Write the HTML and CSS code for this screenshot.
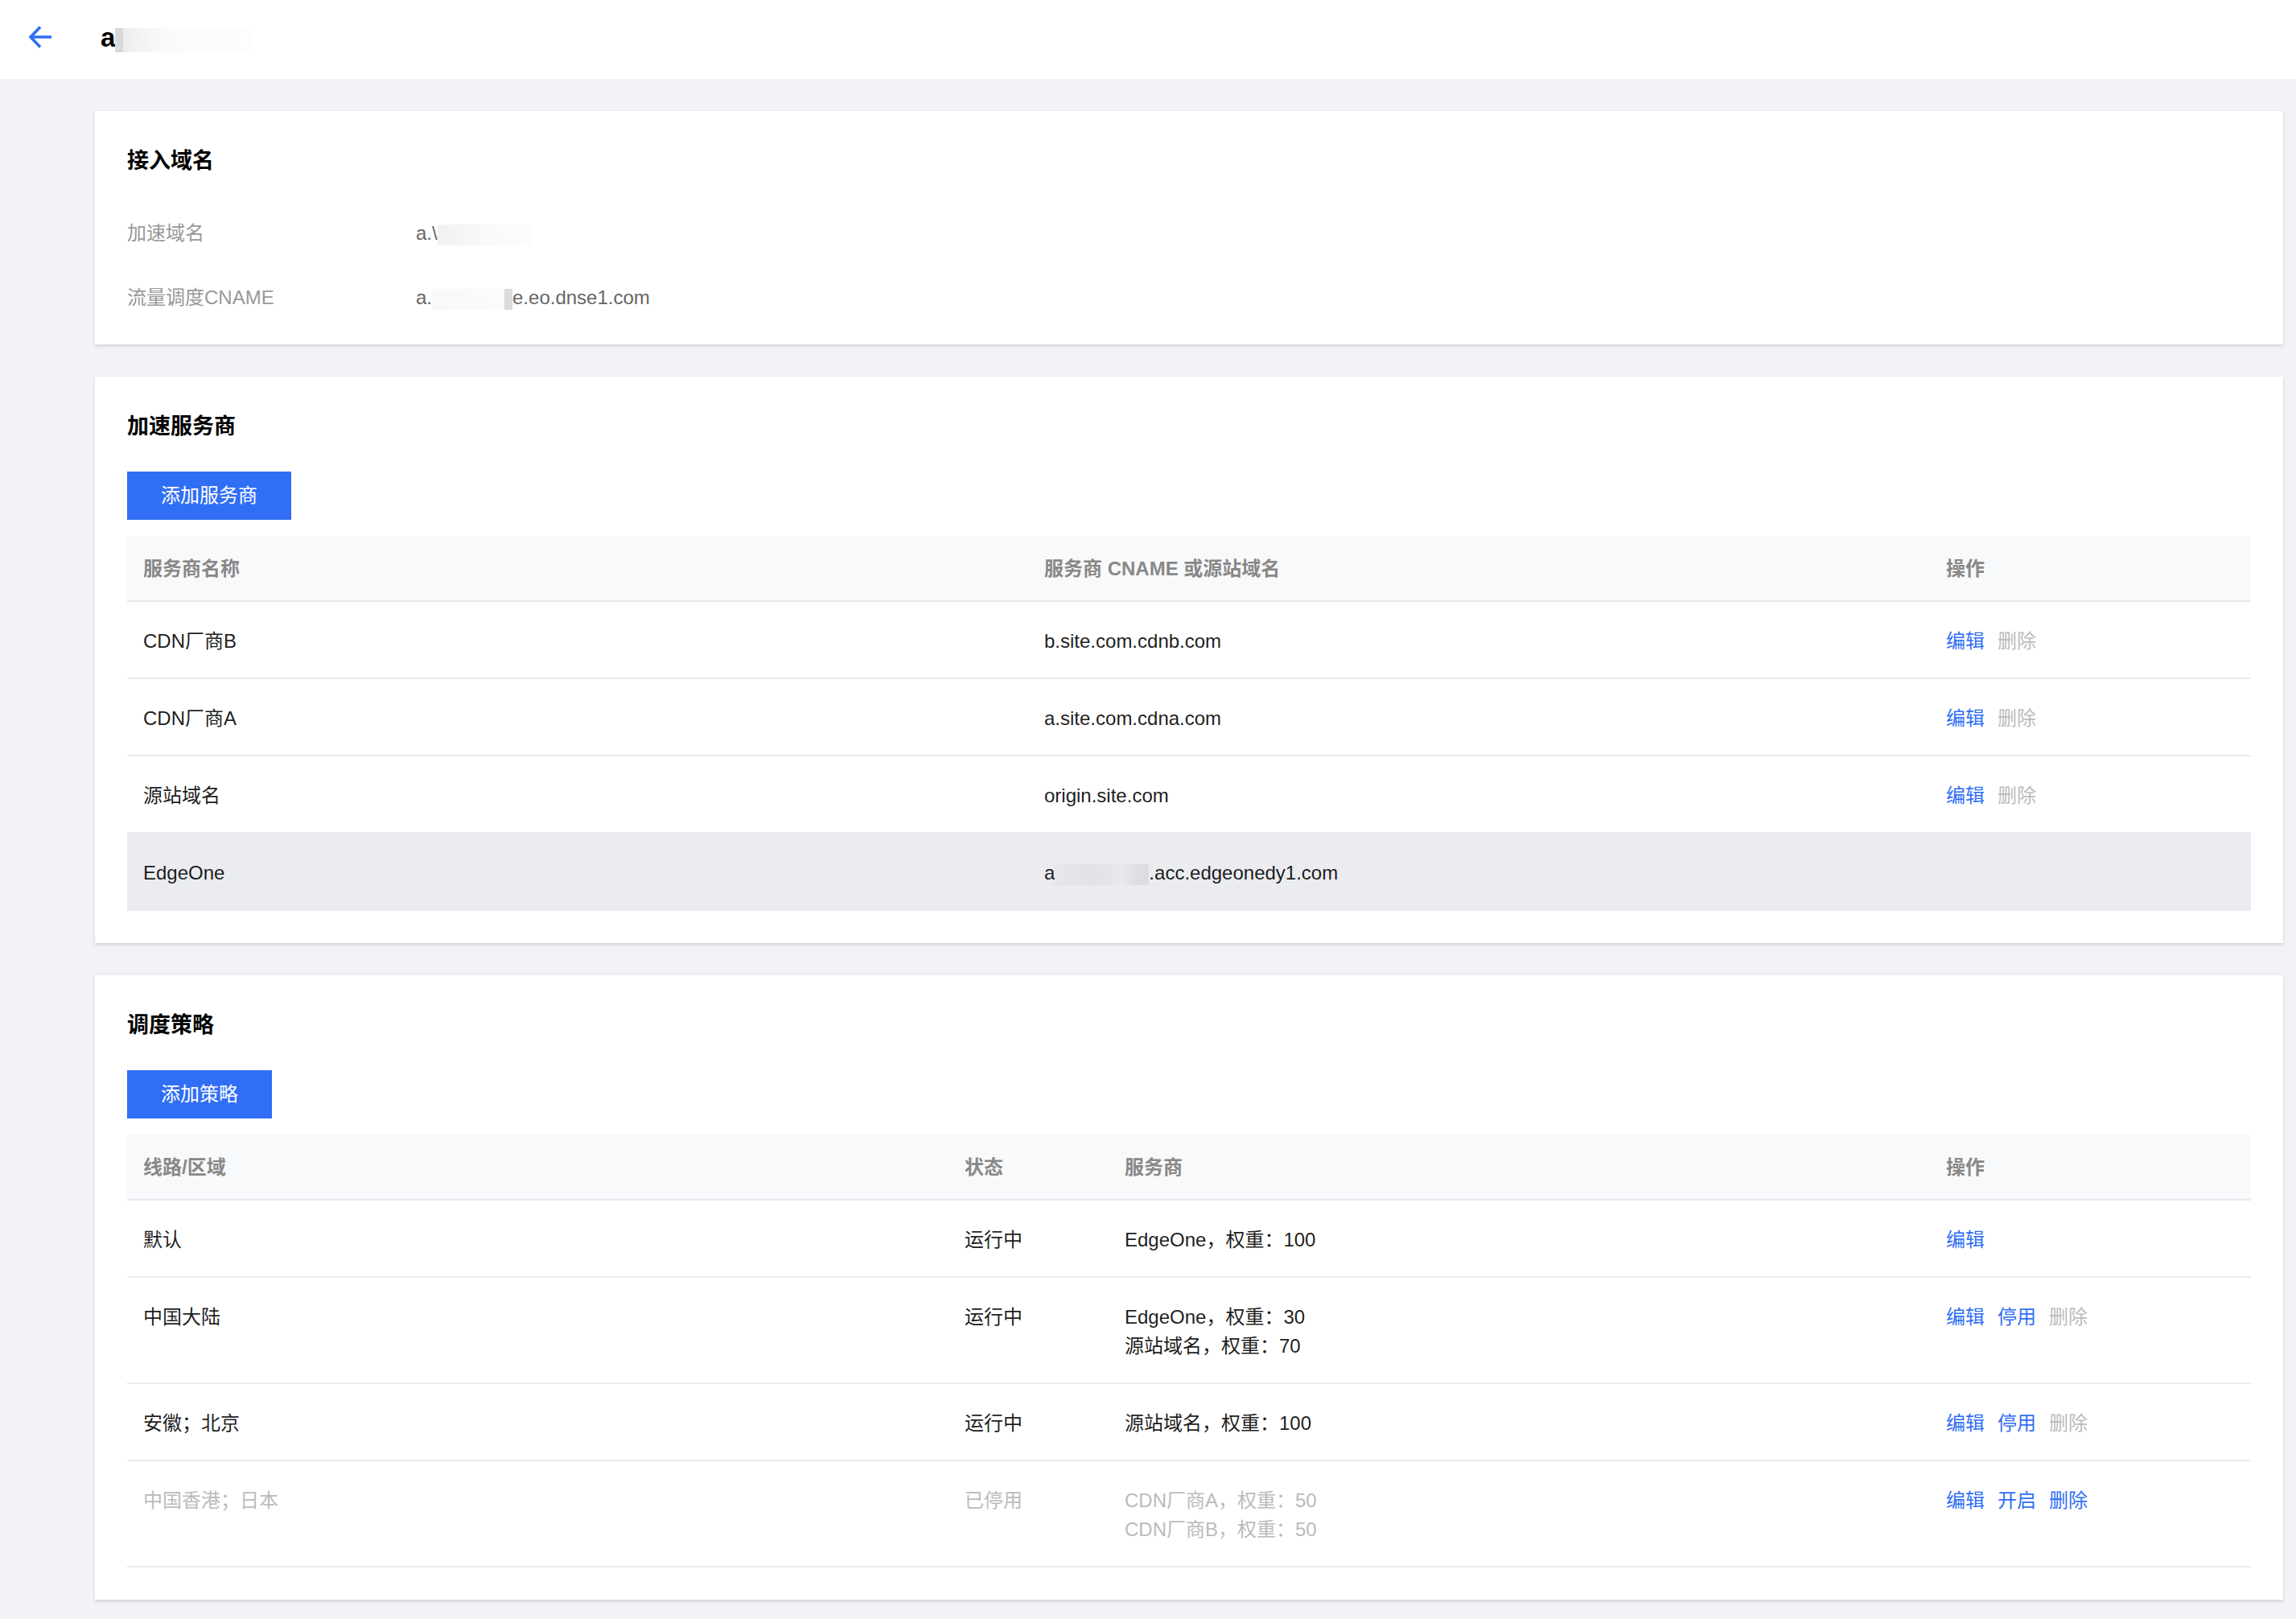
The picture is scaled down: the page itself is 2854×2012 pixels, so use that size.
FILE: index.html
```html
<!DOCTYPE html>
<html lang="zh-CN">
<head>
    <meta charset="UTF-8">
    <meta name="viewport" content="width=device-width, initial-scale=1.0">
    <title>域名详情</title>
    <link rel="stylesheet" href="styles.css">
</head>
<body>
    <header class="topbar">
        <a class="back" href="#">
            <svg width="28" height="28" viewBox="0 0 28 28">
                <path d="M28 14H2.5M14 1.5L2 14L14 26.5" fill="none" stroke="#306ef5" stroke-width="3.6"/>
            </svg>
        </a>
        <h1 class="page-title">a<span class="mask mask-title"></span></h1>
    </header>

    <main class="content">
        <section class="card">
            <h2>接入域名</h2>
            <dl class="info">
                <div class="info-row">
                    <dt>加速域名</dt>
                    <dd>a.\<span class="mask mask-domain"></span></dd>
                </div>
                <div class="info-row">
                    <dt>流量调度CNAME</dt>
                    <dd>a.<span class="mask mask-cname"></span>e.eo.dnse1.com</dd>
                </div>
            </dl>
        </section>

        <section class="card">
            <h2>加速服务商</h2>
            <button class="btn">添加服务商</button>
            <table class="grid">
                <colgroup>
                    <col class="col-name">
                    <col class="col-cname">
                    <col>
                </colgroup>
                <thead>
                    <tr><th>服务商名称</th><th>服务商 CNAME 或源站域名</th><th>操作</th></tr>
                </thead>
                <tbody>
                    <tr>
                        <td>CDN厂商B</td>
                        <td>b.site.com.cdnb.com</td>
                        <td class="ops"><a href="#">编辑</a><a href="#" class="off">删除</a></td>
                    </tr>
                    <tr>
                        <td>CDN厂商A</td>
                        <td>a.site.com.cdna.com</td>
                        <td class="ops"><a href="#">编辑</a><a href="#" class="off">删除</a></td>
                    </tr>
                    <tr>
                        <td>源站域名</td>
                        <td>origin.site.com</td>
                        <td class="ops"><a href="#">编辑</a><a href="#" class="off">删除</a></td>
                    </tr>
                    <tr class="row-hl">
                        <td>EdgeOne</td>
                        <td>a<span class="mask mask-edge"></span>.acc.edgeonedy1.com</td>
                        <td></td>
                    </tr>
                </tbody>
            </table>
        </section>

        <section class="card">
            <h2>调度策略</h2>
            <button class="btn">添加策略</button>
            <table class="grid">
                <colgroup>
                    <col class="col-region">
                    <col class="col-state">
                    <col class="col-vendor">
                    <col>
                </colgroup>
                <thead>
                    <tr><th>线路/区域</th><th>状态</th><th>服务商</th><th>操作</th></tr>
                </thead>
                <tbody>
                    <tr>
                        <td>默认</td>
                        <td>运行中</td>
                        <td>EdgeOne，权重：100</td>
                        <td class="ops"><a href="#">编辑</a></td>
                    </tr>
                    <tr>
                        <td>中国大陆</td>
                        <td>运行中</td>
                        <td>EdgeOne，权重：30<br>源站域名，权重：70</td>
                        <td class="ops"><a href="#">编辑</a><a href="#">停用</a><a href="#" class="off">删除</a></td>
                    </tr>
                    <tr>
                        <td>安徽；北京</td>
                        <td>运行中</td>
                        <td>源站域名，权重：100</td>
                        <td class="ops"><a href="#">编辑</a><a href="#">停用</a><a href="#" class="off">删除</a></td>
                    </tr>
                    <tr class="row-off">
                        <td>中国香港；日本</td>
                        <td>已停用</td>
                        <td>CDN厂商A，权重：50<br>CDN厂商B，权重：50</td>
                        <td class="ops"><a href="#">编辑</a><a href="#">开启</a><a href="#">删除</a></td>
                    </tr>
                </tbody>
            </table>
        </section>
    </main>
</body>
</html>
```

FILE: styles.css
```css
body {
    margin: 0;
    background-color: #f2f3f7;
    font-family: "Liberation Sans", "Noto Sans CJK SC", sans-serif;
    font-size: 24px;
    color: rgba(0, 0, 0, 0.9);
}

/* top bar */
.topbar {
    height: 98px;
    background-color: #fff;
    display: flex;
    align-items: center;
    padding-left: 36px;
}
.back {
    display: flex;
    width: 28px;
    height: 28px;
    margin-top: -6px;
    margin-right: 61px;
}
.page-title {
    margin: -4px 0 0;
    font-size: 33px;
    line-height: 44px;
    font-weight: 700;
    color: #000;
    display: flex;
    align-items: center;
}

/* blurred bits of the domain */
.mask {
    display: inline-block;
    vertical-align: middle;
    height: 26px;
}
.mask-title {
    width: 172px;
    height: 30px;
    margin-top: 6px;
    background: linear-gradient(90deg, #d9d9d9 0, #d9d9d9 10px, #ececec 10px, #f3f3f3 30px, #fafafa 60px, #fdfdfd 100%);
}
.mask-domain {
    width: 118px;
    background: linear-gradient(90deg, #f1f1f1, #f9f9f9 50%, #fdfdfd);
}
.mask-cname {
    width: 100px;
    background: linear-gradient(90deg, #f8f8f8, #fbfbfb 90%, #dcdcdc 90%, #dcdcdc);
}
.mask-edge {
    width: 117px;
    background: linear-gradient(90deg, #e6e7eb, #e1e2e6 40%, #e8e9ed 70%, #dcdde1 90%);
}

/* page */
.content {
    padding: 40px 16px 26px 118px;
}
.card {
    background-color: #fff;
    padding: 40px;
    margin-bottom: 40px;
    box-shadow: 0 2px 4px rgba(54, 58, 80, 0.18);
}
.card:last-child {
    margin-bottom: 0;
}
.card h2 {
    margin: 0;
    font-size: 27px;
    line-height: 44px;
    font-weight: 700;
    color: #000;
}

.info {
    margin: 50px 0 0;
}
.info-row {
    display: flex;
    line-height: 36px;
}
.info-row + .info-row {
    margin-top: 44px;
}
.info dt {
    width: 359px;
    color: #999;
}
.info dd {
    margin: 0;
    color: #666;
}

.btn {
    display: block;
    margin-top: 34px;
    height: 60px;
    padding: 0 42px;
    border: none;
    background-color: #316ef6;
    color: #fff;
    font: inherit;
    line-height: 60px;
    cursor: pointer;
}

/* tables */
.grid {
    width: 100%;
    margin-top: 20px;
    border-collapse: collapse;
    table-layout: fixed;
}
.col-name { width: 1120px; }
.col-cname { width: 1121px; }
.col-region { width: 1021px; }
.col-state { width: 199px; }
.col-vendor { width: 1021px; }

.grid th {
    background-color: #f8f9fa;
    color: #888;
    font-weight: 700;
    text-align: left;
    padding: 23px 20px 21px;
    line-height: 36px;
    border-bottom: 2px solid #e7e8ee;
}
.grid td {
    padding: 31px 20px 27px;
    line-height: 36px;
    vertical-align: top;
    border-bottom: 2px solid #e9eaef;
}
.row-hl td {
    background-color: #ebecf0;
    border-bottom-color: #ebecf0;
}
.row-off td {
    color: #bbb;
}

.ops a {
    color: #306ef5;
    text-decoration: none;
    margin-right: 16px;
}
.ops a.off {
    color: #bbb;
}
```
